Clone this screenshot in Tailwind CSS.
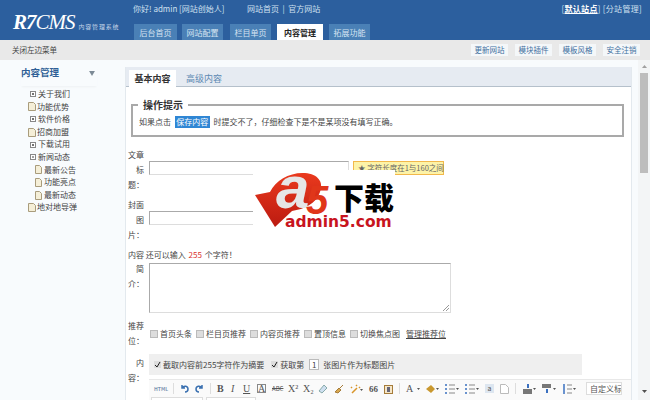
<!DOCTYPE html>
<html><head><meta charset="utf-8"><script src="https://cdn.jsdelivr.net/npm/@tailwindcss/browser@4"></script></head>
<body class="w-[650px] h-[400px] overflow-hidden bg-white relative font-['Noto_Sans_CJK_SC','Liberation_Sans',sans-serif] text-[8px] leading-[12px] text-[#444]">
<!-- header -->
<header class="h-[40px] bg-[#2c5f9e] flex text-[#cfe0f0] relative">
  <div class="w-[133px] pl-[13px] pt-[9px] flex items-end h-[33px] text-white">
    <span class="font-['Liberation_Serif',serif] italic text-[21px] leading-[22px] tracking-[-1px]"><b>R7</b>CMS</span>
    <span class="text-[6px] leading-[8px] ml-[4px] mb-[2px] text-[#c5d6e8] tracking-[0.8px]">内容管理系统</span>
  </div>
  <div class="flex flex-col flex-1">
    <div class="h-[24px] pt-[3px] flex text-[8px]"><span class="w-[114px]">你好! admin [网站创始人]</span><span>网站首页 &nbsp;|&nbsp; 官方网站</span>
      <span class="ml-auto mr-[8px] tracking-[0.3px]">[<b class="text-white underline">默认站点</b>] [分站管理]</span></div>
    <nav class="flex h-[16px] text-[8px] leading-[17px] text-center text-[#d5e4f2]">
      <a class="w-[43px] ml-[1px] bg-[#4a80b6]">后台首页</a>
      <a class="w-[41px] ml-[5px] bg-[#4a80b6]">网站配置</a>
      <a class="w-[41px] ml-[7px] bg-[#4a80b6]">栏目单页</a>
      <a class="w-[46px] ml-[6px] bg-white text-[#222] font-bold">内容管理</a>
      <a class="w-[41px] ml-[6px] bg-[#4a80b6]">拓展功能</a>
    </nav>
  </div>
</header>
<!-- toolbar -->
<div class="h-[20px] bg-[#e9e9e9] flex items-center pl-[12px] pr-[10px] text-[7.500px] text-[#444]">
  <span>关闭左边菜单</span>
  <div class="ml-auto flex gap-[7px] text-[#3f6f9f]">
    <a class="w-[37px] h-[12px] bg-[#f4f7f9] text-center leading-[12px]">更新网站</a>
    <a class="w-[37px] h-[12px] bg-[#f4f7f9] text-center leading-[12px]">模块插件</a>
    <a class="w-[37px] h-[12px] bg-[#f4f7f9] text-center leading-[12px]">模板风格</a>
    <a class="w-[37px] h-[12px] bg-[#f4f7f9] text-center leading-[12px]">安全注销</a>
  </div>
</div>
<div class="flex h-[340px] bg-[#f8fbfd]">
  <!-- sidebar -->
  <aside class="w-[125px] shrink-0 pt-[5px]">
    <div class="ml-[21px] w-[76px] h-[21px] flex justify-between font-bold text-[#2f5f96] text-[9.500px] leading-[14px] shadow-[0_2px_2px_-1px_#eef1f3]">
      <span>内容管理</span>
      <svg width="6" height="5" viewBox="0 0 7 6" class="mt-[6px] mr-[2px]"><path d="M0 0h7L3.500 6z" fill="#7c8a96"/></svg>
    </div>
    <ul class="mt-[2px] text-[#444] leading-[12.600px]">
      <li class="flex items-center pl-[30px] gap-[2px]"><svg width="6" height="6"><rect x=".5" y=".5" width="5" height="5" fill="#fff" stroke="#888"/><path d="M2 3h2M3 2v2" stroke="#444"/></svg>关于我们</li>
      <li class="flex items-center pl-[28px] gap-[1px]"><svg width="8" height="9"><path d="M.5.5h5l2 2v6h-7z" fill="#f5efd8" stroke="#a99c7c"/></svg>功能优势</li>
      <li class="flex items-center pl-[30px] gap-[2px]"><svg width="6" height="6"><rect x=".5" y=".5" width="5" height="5" fill="#fff" stroke="#888"/><path d="M2 3h2M3 2v2" stroke="#444"/></svg>软件价格</li>
      <li class="flex items-center pl-[28px] gap-[1px]"><svg width="8" height="9"><path d="M.5.5h5l2 2v6h-7z" fill="#f5efd8" stroke="#a99c7c"/></svg>招商加盟</li>
      <li class="flex items-center pl-[30px] gap-[2px]"><svg width="6" height="6"><rect x=".5" y=".5" width="5" height="5" fill="#fff" stroke="#888"/><path d="M2 3h2M3 2v2" stroke="#444"/></svg>下载试用</li>
      <li class="flex items-center pl-[30px] gap-[2px]"><svg width="6" height="6"><rect x=".5" y=".5" width="5" height="5" fill="#fff" stroke="#888"/><path d="M2 3h2" stroke="#444"/></svg>新闻动态</li>
      <li class="flex items-center pl-[35px] gap-[2px]"><svg width="7" height="9"><path d="M.5.5h4l2 2v6h-6z" fill="#f5efd8" stroke="#a99c7c"/></svg>最新公告</li>
      <li class="flex items-center pl-[35px] gap-[2px]"><svg width="7" height="9"><path d="M.5.5h4l2 2v6h-6z" fill="#f5efd8" stroke="#a99c7c"/></svg>功能亮点</li>
      <li class="flex items-center pl-[35px] gap-[2px]"><svg width="7" height="9"><path d="M.5.5h4l2 2v6h-6z" fill="#f5efd8" stroke="#a99c7c"/></svg>最新动态</li>
      <li class="flex items-center pl-[28px] gap-[1px]"><svg width="8" height="9"><path d="M.5.5h5l2 2v6h-7z" fill="#f5efd8" stroke="#a99c7c"/></svg>地对地导弹</li>
    </ul>
  </aside>
  <!-- content -->
  <main class="w-[507px] mt-[7px] bg-white border-x border-[#e3e9ee] h-[333px] overflow-hidden">
    <div class="h-[20px] bg-[#e6ebf2] border-b border-[#b5c0cb] flex pl-[3px] pt-[3px] text-[9px] leading-[17px]">
      <span class="w-[47px] h-[17px] bg-white text-center font-bold text-[#333]">基本内容</span>
      <span class="ml-[10px] text-[#5d89b3]">高级内容</span>
    </div>
    <fieldset class="ml-[5px] mr-[7px] mt-[12px] h-[38px] border-2 border-[#a9a9a9] pl-[6px]">
      <legend class="ml-[-1px] px-[5px] font-bold text-[10px] leading-[12px] text-[#333]">操作提示</legend>
      <p class="pt-[5px] whitespace-nowrap">如果点击 <span class="inline-block w-[35px] text-center bg-[#2f86d4] text-white ml-[2px] mr-[2px]">保存内容</span> 时提交不了，仔细检查下是不是某项没有填写正确。</p>
    </fieldset>
    <div class="mt-[10px] pl-[2px]">
      <div class="flex h-[50px]">
        <div class="w-[21px] leading-[15px]">文章<br><span class="pl-[8px]">标</span><br>题：</div>
        <div class="flex h-[14px] mt-[14px]">
          <div class="w-[200px] h-[14px] border border-[#aaa] border-r-[#ddd] border-b-[#ddd] bg-white"></div>
          <div class="ml-[4px] w-[91px] h-[14px] bg-[#fdf3a8] border border-[#f2b84b] pl-[4px] text-[7.500px] text-[#666] whitespace-nowrap leading-[12px]">★ 字符长度在1与160之间</div>
        </div>
      </div>
      <div class="flex h-[50px]">
        <div class="w-[21px] leading-[15px]">封面<br><span class="pl-[8px]">图</span><br>片：</div>
        <div class="w-[200px] h-[14px] mt-[14px] border border-[#aaa] border-r-[#ddd] border-b-[#ddd] bg-white"></div>
      </div>
      <p class="h-[9px] leading-[9px] mt-[3px]">内容 还可以输入 <span class="text-[#d9302c] px-[1px]">255</span> 个字符！</p>
      <div class="flex h-[58px] mt-[1px]">
        <div class="w-[21px] leading-[15px] pt-[1px]"><span class="pl-[8px]">简</span><br>介：</div>
        <div class="relative w-[302px] h-[50px] mt-[3px] border border-[#aaa] border-r-[#ddd] border-b-[#ddd] bg-white">
          <svg width="6" height="6" class="absolute right-[1px] bottom-[1px]"><path d="M0 6L6 0M3 6l3-3" stroke="#999"/></svg>
        </div>
      </div>
      <div class="flex h-[36px]">
        <div class="w-[21px] leading-[15px]">推荐<br>位：</div>
        <div class="flex items-start gap-[4px] pt-[10px] pl-[1px] whitespace-nowrap text-[#444]">
          <label class="flex items-center gap-[2px]"><span class="w-[8px] h-[8px] bg-[#ddd] border border-[#bbb]"></span>首页头条</label>
          <label class="flex items-center gap-[2px]"><span class="w-[8px] h-[8px] bg-[#ddd] border border-[#bbb]"></span>栏目页推荐</label>
          <label class="flex items-center gap-[2px]"><span class="w-[8px] h-[8px] bg-[#ddd] border border-[#bbb]"></span>内容页推荐</label>
          <label class="flex items-center gap-[2px]"><span class="w-[8px] h-[8px] bg-[#ddd] border border-[#bbb]"></span>置顶信息</label>
          <label class="flex items-center gap-[2px]"><span class="w-[8px] h-[8px] bg-[#ddd] border border-[#bbb]"></span>切换焦点图</label>
          <span class="underline ml-[2px]">管理推荐位</span>
        </div>
      </div>
      <div class="flex">
        <div class="w-[21px] leading-[15px] pt-[1px]"><span class="pl-[8px]">内</span><br>容：</div>
        <div class="flex-1 min-w-0">
          <div class="w-[433px] h-[21px] bg-[#efefef] flex items-center pl-[5px] whitespace-nowrap">
            <svg width="7" height="7"><rect width="7" height="7" fill="#ddd"/><path d="M1 4l2 2 3-5" stroke="#222" fill="none"/></svg>
            <span class="ml-[2px]">截取内容前255字符作为摘要</span>
            <svg width="7" height="7" class="ml-[7px]"><rect width="7" height="7" fill="#ddd"/><path d="M1 4l2 2 3-5" stroke="#222" fill="none"/></svg>
            <span class="ml-[2px]">获取第</span>
            <span class="ml-[5px] w-[10px] h-[11px] bg-white border border-[#bbb] text-center leading-[10px] text-[8px]">1</span>
            <span class="ml-[4px]">张图片作为标题图片</span>
          </div>
          <div class="h-[18px] mt-[4px] bg-[#fafafa] border-t border-[#e8e8e8] flex items-center pl-[5px] gap-[6px] text-[#555] text-[10px]">
            <span class="text-[5px] text-[#7a93b0] font-bold w-[13px]">HTML</span>
            <i class="w-px h-[11px] bg-[#ddd]"></i>
            <svg width="9" height="9" viewBox="0 0 9 9"><path d="M2 1v3h3M2 4c2-3 6-2 6 1s-2 3-3 3" stroke="#3a70b0" stroke-width="1.500" fill="none"/></svg>
            <svg width="9" height="9" viewBox="0 0 9 9"><path d="M7 1v3H4M7 4C5 1 1 2 1 5s2 3 3 3" stroke="#3a70b0" stroke-width="1.500" fill="none"/></svg>
            <i class="w-px h-[11px] bg-[#ddd]"></i>
            <b class="font-['Liberation_Serif',serif] w-[8px]">B</b>
            <i class="font-['Liberation_Serif',serif] w-[6px]">I</i>
            <u class="font-['Liberation_Serif',serif] w-[8px]">U</u>
            <span class="font-['Liberation_Serif',serif] w-[9px] h-[9px] border border-[#888] leading-[8px] text-center">A</span>
            <s class="text-[6px] w-[10px]">ABC</s>
            <span class="font-['Liberation_Serif',serif] w-[9px]">X²</span>
            <span class="font-['Liberation_Serif',serif] w-[9px]">X₂</span>
            <svg width="10" height="10"><path d="M1 7l5-6 3 3-5 5z" fill="#cfe0f0" stroke="#8aa"/></svg>
            <svg width="10" height="10"><path d="M9 1L5 5M1 8l4-4 2 2-3 3z" stroke="#a67c3a" fill="#d8a850"/></svg>
            <svg width="13" height="10"><path d="M2 9l5-5M6 1l1 1M1 3l1 1M9 3l1 1" stroke="#d8952a" stroke-width="1.500"/><path d="M10 5h3l-1.500 2z" fill="#555"/></svg>
            <b class="text-[9px] w-[9px] font-['Liberation_Serif',serif]">66</b>
            <svg width="9" height="10"><rect x=".5" y="1.500" width="8" height="8" fill="#f5e6c8" stroke="#a67c3a"/><rect x="3" y="3" width="3" height="5" fill="#667"/></svg>
            <i class="w-px h-[11px] bg-[#ddd]"></i>
            <span class="font-['Liberation_Serif',serif] w-[8px]">A</span><svg width="3" height="2" class="-ml-[3px]"><path d="M0 0h3L1.500 2z" fill="#555"/></svg>
            <svg width="13" height="8"><path d="M0 4l5-4 4 4-4 4z" fill="#c9982f"/><path d="M10 3h3l-1.500 2z" fill="#555"/></svg>
            <svg width="14" height="10"><path d="M0 1h2M0 5h2M0 9h2" stroke="#3a70c0" stroke-width="1.500"/><path d="M4 1h6M4 5h6M4 9h6" stroke="#888"/><path d="M11 4h3l-1.500 2z" fill="#555"/></svg>
            <svg width="14" height="10"><path d="M0 1h2M0 5h2M0 9h2" stroke="#3a70c0" stroke-width="1.500"/><path d="M4 1h6M4 5h6M4 9h6" stroke="#888"/><path d="M11 4h3l-1.500 2z" fill="#555"/></svg>
            <span class="w-[9px] h-[9px] bg-[#dde6f0] text-[7px] leading-[9px] text-center">a</span>
            <svg width="9" height="10"><path d="M.5.5h5l3 3v6h-8z" fill="#fff" stroke="#bbb"/></svg>
            <i class="w-px h-[11px] bg-[#ddd]"></i>
            <svg width="14" height="10"><path d="M1 5h9v5H1z" fill="#777"/><path d="M5 0h2v4H5z" fill="#3a70c0"/><path d="M11 4h3l-1.500 2z" fill="#555"/></svg>
            <svg width="14" height="10"><path d="M0 0h9v4H0z" fill="#777"/><path d="M4 5h2v4H4z" fill="#3a70c0"/><path d="M11 4h3l-1.500 2z" fill="#555"/></svg>
            <svg width="14" height="10"><path d="M2 0v10" stroke="#3a70c0" stroke-width="1.500"/><path d="M5 1h5M5 5h5M5 9h5" stroke="#888"/><path d="M11 4h3l-1.500 2z" fill="#555"/></svg>
            <span class="h-[13px] ml-[4px] px-[3px] w-[36px] shrink-0 border border-[#ddd] bg-white text-[8px] leading-[12px] whitespace-nowrap overflow-hidden">自定义标</span>
          </div>
          <div class="flex gap-[3px] pl-[2px] bg-[#fafafa] h-[6px]">
            <i class="w-[52px] border border-[#ddd] bg-white"></i>
            <i class="w-[50px] border border-[#ddd] bg-white"></i>
          </div>
        </div>
      </div>
    </div>
  </main>
  <!-- scrollbar -->
  <div class="ml-[6px] w-[12px] h-[340px] flex flex-col items-center bg-[#f3f5f6]">
    <svg width="5" height="3" class="mt-[5px]"><path d="M0 3h5L2.500 0z" fill="#a0a0a0"/></svg>
    <div class="w-[8px] h-[100px] mt-[5px] bg-[#bdbdbd]"></div>
    <svg width="5" height="3" class="mt-auto mb-[7px]"><path d="M0 0h5L2.500 3z" fill="#505050"/></svg>
  </div>
</div>
<!-- watermark -->
<div class="absolute left-[253px] top-[170px] w-[142px] h-[62px] bg-white">
  <svg width="142" height="62" viewBox="253 170 142 62" class="absolute left-0 top-0">
    <defs><linearGradient id="g" x1="0" y1="0" x2="0" y2="1"><stop offset="0" stop-color="#ea3a1e"/><stop offset="1" stop-color="#bb1a10"/></linearGradient></defs>
    <path d="M255 195L270 192C276 180 290 172 305 173 318 174 324 182 320 192 316 204 304 209 292 211L275 227z" fill="url(#g)"/>
  </svg>
  <span class="absolute left-[23px] top-[-12px] font-['Liberation_Sans',sans-serif] font-bold italic text-[60px] leading-[60px] text-[#e6e6e6]">a</span>
  <span class="absolute left-[53px] top-[10px] font-['Liberation_Sans',sans-serif] font-bold italic text-[40px] leading-[40px] text-[#e0361a]">5</span>
  <span class="absolute left-[81px] top-[10px] text-[30px] leading-[32px] font-black text-black whitespace-nowrap">下载</span>
  <span class="absolute left-[32px] top-[44px] font-['DejaVu_Sans',sans-serif] font-bold text-[15.500px] leading-[16px] text-[#c8141e] whitespace-nowrap">admin5.com</span>
</div>
</body></html>
